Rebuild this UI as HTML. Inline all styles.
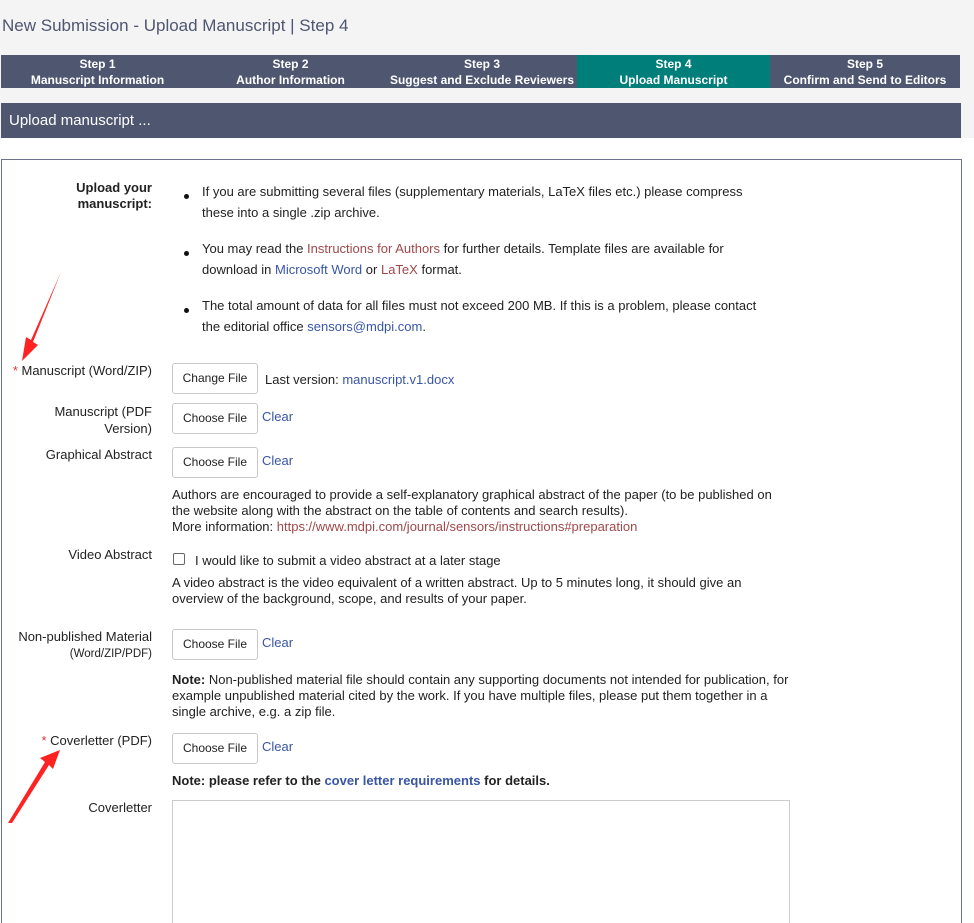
<!DOCTYPE html>
<html><head><meta charset="utf-8"><style>
*{margin:0;padding:0;box-sizing:border-box}
html,body{width:974px;height:923px;overflow:hidden}
body{background:#f4f4f4;font-family:"Liberation Sans",Arial,sans-serif;font-size:13px;color:#222;position:relative}
.a{position:absolute;white-space:nowrap}
.r{text-align:right}
.b{color:#3955a5}
.m{color:#a0484a}
.btn{position:absolute;width:86px;height:31px;border:1px solid #c8c8c8;border-radius:3px;background:#fff;font-size:12px;text-align:center;line-height:29px;color:#222}
.step{position:absolute;top:55px;height:33px;background:#4f5670;color:#fff;font-weight:bold;font-size:12px;text-align:center;line-height:16px;padding-top:1px}
.dot{position:absolute;width:5px;height:5px;border-radius:50%;background:#111}
</style></head><body>
<div class="a" style="left:2px;top:16px;font-size:17px;color:#4f5670">New Submission - Upload Manuscript | Step 4</div>
<div class="step" style="left:1px;width:193px">Step 1<br>Manuscript Information</div>
<div class="step" style="left:194px;width:193px">Step 2<br>Author Information</div>
<div class="step" style="left:387px;width:190px">Step 3<br>Suggest and Exclude Reviewers</div>
<div class="step" style="left:577px;width:193px;background:#007e7a">Step 4<br>Upload Manuscript</div>
<div class="step" style="left:770px;width:190px">Step 5<br>Confirm and Send to Editors</div>
<div class="a" style="left:1px;top:103px;width:960px;height:35px;background:#4f5670;color:#fff;font-size:15px;line-height:35px;padding-left:8px">Upload manuscript ...</div>
<div class="a" style="left:0;top:138px;width:974px;height:785px;background:#fff"></div>
<div class="a" style="left:1px;top:159px;width:961px;height:780px;border:1px solid #6b7390;background:#fff"></div>

<div class="a r" style="left:60px;top:180px;width:92px;font-weight:bold;line-height:16px;white-space:normal">Upload your manuscript:</div>
<div class="dot" style="left:184px;top:194px"></div>
<div class="dot" style="left:184px;top:251px"></div>
<div class="dot" style="left:184px;top:308px"></div>
<div class="a" style="left:202px;top:181px;line-height:21px">If you are submitting several files (supplementary materials, LaTeX files etc.) please compress<br>these into a single .zip archive.</div>
<div class="a" style="left:202px;top:238px;line-height:21px">You may read the <span class="m">Instructions for Authors</span> for further details. Template files are available for<br>download in <span class="b">Microsoft Word</span> or <span class="m">LaTeX</span> format.</div>
<div class="a" style="left:202px;top:295px;line-height:21px">The total amount of data for all files must not exceed 200 MB. If this is a problem, please contact<br>the editorial office <span class="b">sensors@mdpi.com</span>.</div>

<div class="a r" style="left:0;top:363px;width:152px"><span style="color:#d33">*</span> Manuscript (Word/ZIP)</div>
<div class="btn" style="left:172px;top:363px">Change File</div>
<div class="a" style="left:265px;top:372px">Last version: <span class="b">manuscript.v1.docx</span></div>

<div class="a r" style="left:0;top:403px;width:152px;line-height:17px">Manuscript (PDF<br>Version)</div>
<div class="btn" style="left:172px;top:403px">Choose File</div>
<div class="a b" style="left:262px;top:409px;font-size:13px">Clear</div>

<div class="a r" style="left:0;top:447px;width:152px">Graphical Abstract</div>
<div class="btn" style="left:172px;top:447px">Choose File</div>
<div class="a b" style="left:262px;top:453px;font-size:13px">Clear</div>
<div class="a" style="left:172px;top:487px;line-height:16px">Authors are encouraged to provide a self-explanatory graphical abstract of the paper (to be published on<br>the website along with the abstract on the table of contents and search results).<br>More information: <span class="m">https://www.mdpi.com/journal/sensors/instructions#preparation</span></div>

<div class="a r" style="left:0;top:547px;width:152px">Video Abstract</div>
<div class="a" style="left:173px;top:553px;width:12px;height:12px;border:1px solid #666;border-radius:2px"></div>
<div class="a" style="left:195px;top:553px">I would like to submit a video abstract at a later stage</div>
<div class="a" style="left:172px;top:575px;line-height:16px">A video abstract is the video equivalent of a written abstract. Up to 5 minutes long, it should give an<br>overview of the background, scope, and results of your paper.</div>

<div class="a r" style="left:0;top:629px;width:152px;line-height:16px">Non-published Material<br><span style="font-size:11.5px">(Word/ZIP/PDF)</span></div>
<div class="btn" style="left:172px;top:629px">Choose File</div>
<div class="a b" style="left:262px;top:635px;font-size:13px">Clear</div>
<div class="a" style="left:172px;top:672px;line-height:16px"><b>Note:</b> Non-published material file should contain any supporting documents not intended for publication, for<br>example unpublished material cited by the work. If you have multiple files, please put them together in a<br>single archive, e.g. a zip file.</div>

<div class="a r" style="left:0;top:733px;width:152px"><span style="color:#d33">*</span> Coverletter (PDF)</div>
<div class="btn" style="left:172px;top:733px">Choose File</div>
<div class="a b" style="left:262px;top:739px;font-size:13px">Clear</div>
<div class="a" style="left:172px;top:773px;font-weight:bold">Note: please refer to the <span class="b">cover letter requirements</span> for details.</div>

<div class="a r" style="left:0;top:800px;width:152px">Coverletter</div>
<div class="a" style="left:172px;top:800px;width:618px;height:130px;border:1px solid #ccc"></div>

<svg class="a" style="left:0;top:0" width="974" height="923">
<path d="M61 272 L31 340 L26 337 L22 361 L38 345 L33 342 Z" fill="#f22"/>
<path d="M60 750 L40 758 L45 762 L8 823 L12 823 L49 765 L53 769 Z" fill="#f22"/>
</svg>
</body></html>
